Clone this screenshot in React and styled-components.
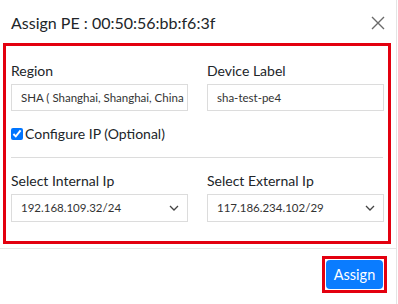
import styled, { createGlobalStyle } from 'styled-components'

const Global = createGlobalStyle`
  html, body {
    margin: 0;
    padding: 0;
    background: #fff;
    font-family: Lato, "Open Sans", sans-serif;
    color: #212529;
  }
`

const fieldsTop = [
  { label: 'Region', value: 'SHA ( Shanghai, Shanghai, China' },
  { label: 'Device Label', value: 'sha-test-pe4' },
]

const fieldsIp = [
  { label: 'Select Internal Ip', value: '192.168.109.32/24' },
  { label: 'Select External Ip', value: '117.186.234.102/29' },
]

export default function App() {
  return (
    <>
      <Global />
      <Modal>
        <Header>
          <Title>Assign PE : 00:50:56:bb:f6:3f</Title>
          <Close aria-label="close">
            <svg width="14" height="14" viewBox="0 0 14 14">
              <path d="M1 1 L13 13 M13 1 L1 13" stroke="#6a6a6a" strokeWidth="1.4" fill="none" />
            </svg>
          </Close>
        </Header>

        <Body>
          <Row>
            {fieldsTop.map(({ label, value }) => (
              <Field key={label}>
                <Label>{label}</Label>
                <Input>{value}</Input>
              </Field>
            ))}
          </Row>

          <Check>
            <input type="checkbox" defaultChecked />
            Configure IP (Optional)
          </Check>

          <Divider />

          <Row>
            {fieldsIp.map(({ label, value }) => (
              <Field key={label}>
                <Label>{label}</Label>
                <Select>
                  <span>{value}</span>
                  <svg width="10" height="6" viewBox="0 0 10 6">
                    <path d="M1 1 L5 5 L9 1" stroke="#444" strokeWidth="1.3" fill="none" />
                  </svg>
                </Select>
              </Field>
            ))}
          </Row>
        </Body>

        <Footer>
          <Highlight>
            <Button>Assign</Button>
          </Highlight>
        </Footer>
      </Modal>
    </>
  )
}

const Modal = styled.div`
  width: 397px;
  height: 304px;
  box-sizing: border-box;
  border-right: 1px solid #e4e4e4;
  background: #fff;
`

const Header = styled.div`
  height: 43px;
  display: flex;
  align-items: center;
  justify-content: space-between;
  padding: 2px 11px 0 11px;
  box-sizing: border-box;
`

const Title = styled.h5`
  margin: 0;
  font-size: 16px;
  font-weight: 400;
  color: #212529;
`

const Close = styled.button`
  background: none;
  border: 0;
  padding: 0;
  display: flex;
  cursor: pointer;
`

const Body = styled.div`
  margin: 0 5px 0 3px;
  border: 3px solid #e3000f;
  padding: 16px 5px 19px 5px;
`

const Row = styled.div`
  display: grid;
  grid-template-columns: 177px 177px;
  column-gap: 19px;
`

const Field = styled.div`
  display: flex;
  flex-direction: column;
`

const Label = styled.label`
  font-size: 14px;
  line-height: 17px;
  margin-bottom: 5px;
  color: #212529;
`

const Input = styled.div`
  height: 27px;
  box-sizing: border-box;
  border: 1px solid #dcdcdc;
  padding: 0 9px;
  font-size: 11.5px;
  line-height: 25px;
  color: #333;
  white-space: nowrap;
  overflow: hidden;
`

const Select = styled(Input)`
  height: 28px;
  line-height: 26px;
  display: flex;
  align-items: center;
  justify-content: space-between;
  padding-right: 8px;
`

const Check = styled.label`
  display: flex;
  align-items: center;
  gap: 2px;
  margin-top: 14px;
  font-size: 14px;
  line-height: 17px;

  input {
    margin: 0;
    width: 12px;
    height: 12px;
    accent-color: #0075ff;
  }
`

const Divider = styled.hr`
  border: 0;
  border-top: 1px solid #dcdcdc;
  margin: 15px 0 14px 0;
`

const Footer = styled.div`
  border-top: 1px solid #e6e6e6;
  margin-top: 4px;
  display: flex;
  justify-content: flex-end;
  padding: 7px 9px 0 0;
`

const Highlight = styled.div`
  border: 3px solid #e3000f;
  padding: 1px;
`

const Button = styled.button`
  width: 57px;
  height: 29px;
  border: 0;
  border-radius: 4px;
  background: #0a7cff;
  color: #fff;
  font-family: Lato, sans-serif;
  font-size: 14.5px;
  padding: 0;
`
